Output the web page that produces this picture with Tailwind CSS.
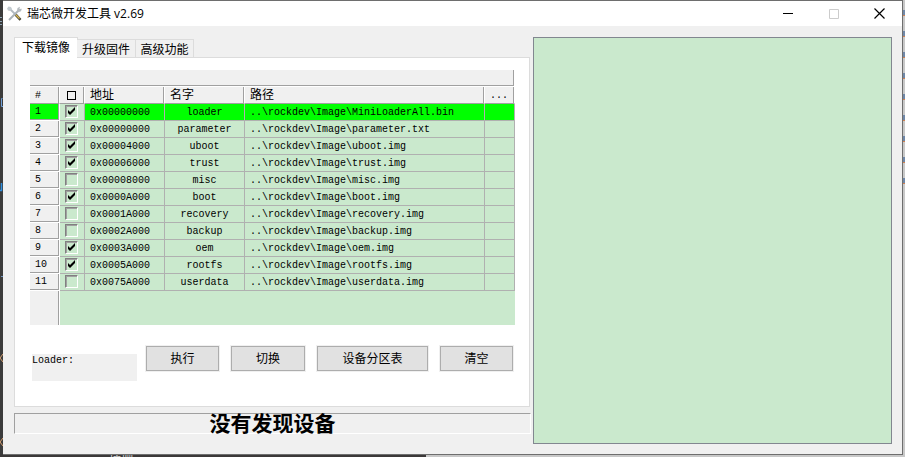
<!DOCTYPE html>
<html lang="zh-CN">
<head>
<meta charset="utf-8">
<title>瑞芯微开发工具 v2.69</title>
<script src="https://cdn.jsdelivr.net/npm/@tailwindcss/browser@4"></script>
</head>
<body class="relative h-screen overflow-hidden bg-[#c8c8c8] pr-[2px] pb-[2px] pl-[3px] font-['Liberation_Sans','Noto_Sans_CJK_SC',sans-serif] text-[12px] leading-[16px] text-black">
<!-- desktop showing around the window -->
<div class="absolute inset-y-0 left-0 w-[3px] bg-[#3b3b3b]" aria-hidden="true">
  <svg class="block h-[457px] w-[3px]" viewBox="0 0 3 457" fill="none">
    <path d="M0 17.5H2M0 21.5H2M0 24.5H2" stroke="#8aa0b0"/>
    <path d="M2.5 98.500H1.500V106.500H3" stroke="#6f9fd8"/>
    <path d="M1.500 183V190.500H0" stroke="#2f8fe0" stroke-width="1.500"/>
    <path d="M1 276.500H3" stroke="#6f93c0"/>
    <path d="M3 354L0 358L3 362M3 438L0 442L3 446" stroke="#d8a070"/>
  </svg>
</div>
<div class="absolute bottom-0 left-0 h-[3px] w-[426px] overflow-hidden bg-[#3b3838] pl-[109px] leading-[14px] text-[#d0d0d0]" aria-hidden="true">按摆</div>
<div class="absolute top-[10px] right-0 flex flex-col gap-[15px]" aria-hidden="true">
  <i class="block h-[6px] w-[2px] border-b border-[#d08050] bg-[#7088a8]"></i>
  <i class="block h-[6px] w-[2px] border-b border-[#d08050] bg-[#7088a8]"></i>
  <i class="block h-[6px] w-[2px] border-b border-[#d08050] bg-[#7088a8]"></i>
  <i class="block h-[6px] w-[2px] border-b border-[#d08050] bg-[#7088a8]"></i>
  <i class="block h-[6px] w-[2px] border-b border-[#d08050] bg-[#7088a8]"></i>
  <i class="block h-[6px] w-[2px] border-b border-[#d08050] bg-[#7088a8]"></i>
  <i class="block h-[6px] w-[2px] border-b border-[#d08050] bg-[#7088a8]"></i>
  <i class="block h-[6px] w-[2px] border-b border-[#d08050] bg-[#7088a8]"></i>
  <i class="block h-[6px] w-[2px] border-b border-[#d08050] bg-[#7088a8]"></i>
</div>
<div class="relative flex h-full flex-col border-t border-r border-b border-[#6e6e6e] bg-[#f0f0f0]">
  <header class="flex h-[25px] shrink-0 items-center bg-white pl-[4px]">
    <svg class="size-[16px]" viewBox="0 0 16 16" fill="none" aria-hidden="true">
      <path d="M2.500 2.500L9 9" stroke="#b3bbc1" stroke-width="1.800"/>
      <path d="M0 2.500L1.500 .5L4 1L5 3L3 5L1 4.500Z" fill="#c3cbd0"/>
      <path d="M8.500 8.500L13.500 13.800" stroke="#4a4636" stroke-width="2.600"/>
      <path d="M8.500 8.500L12.500 12.500" stroke="#d8b850" stroke-width="1.200"/>
      <path d="M11.500 4.500L2 14" stroke="#a9b2b8" stroke-width="2"/>
      <path d="M10 5L10.500 2L13 .8L12.400 3L14.800 2.800L14 5.300L11.200 6.200Z" fill="#b4babf"/>
    </svg>
    <h1 class="ml-[4px] flex-1 font-['Open_Sans','Noto_Sans_CJK_SC',sans-serif] text-[12px]">瑞芯微开发工具 v2.69</h1>
    <button class="grid h-[25px] w-[46px] place-items-center" aria-label="最小化"><svg class="size-[11px]" viewBox="0 0 11 11" aria-hidden="true"><path d="M0 5.5H10" stroke="#000"/></svg></button>
    <button class="grid h-[25px] w-[45px] place-items-center" aria-label="最大化" disabled><svg class="size-[10px]" viewBox="0 0 10 10" aria-hidden="true"><path d="M.5 .5H9.5V9.5H.5Z" fill="none" stroke="#ccc"/></svg></button>
    <button class="grid h-[25px] w-[46px] place-items-center" aria-label="关闭"><svg class="size-[11px]" viewBox="0 0 11 11" aria-hidden="true"><path d="M.5 .5L10.5 10.5M10.5 .5L.5 10.5" stroke="#000" stroke-width="1.2"/></svg></button>
  </header>
  <main class="flex min-h-0 flex-1 gap-[2px] pt-[11px] pr-[10px] pb-[10px] pl-[11px]">
    <section class="flex w-[517px] shrink-0 flex-col">
      <div class="relative z-10 -mb-px flex items-end" role="tablist">
        <button role="tab" aria-selected="true" class="h-[21px] w-[64px] border border-b-0 border-[#dcdcdc] bg-white">下载镜像</button>
        <button role="tab" aria-selected="false" class="-ml-px h-[19px] w-[59px] border border-l-0 border-[#dcdcdc] bg-[#f0f0f0] pt-[2px]">升级固件</button>
        <button role="tab" aria-selected="false" class="h-[19px] w-[58px] border border-l-0 border-[#dcdcdc] bg-[#f0f0f0] pt-[2px]">高级功能</button>
      </div>
      <div role="tabpanel" class="mr-px flex-1 border border-[#dcdcdc] bg-white pt-[12px] pr-[14px] pl-[15px]">
        <div class="mr-px h-[16px] border-r border-b border-[#a0a0a0] bg-[#f0f0f0]"></div>
        <div class="bg-[#cae9cd]">
          <table class="w-full table-fixed border-separate border-spacing-0 font-['Liberation_Mono','Noto_Sans_CJK_SC',monospace] text-[10px] leading-[14px]">
            <colgroup><col class="w-[30px]"><col class="w-[25px]"><col class="w-[80px]"><col class="w-[80px]"><col><col class="w-[30px]"></colgroup>
            <thead class="text-left">
              <tr id="head" class="h-[18px] bg-[#f0f0f0]"></tr>
            </thead>
            <tbody id="rows"></tbody>
          </table>
          <div class="h-[34px] w-[30px] border-r border-white bg-[#f0f0f0]"><div class="h-full border-r border-[#a0a0a0]"></div></div>
        </div>
        <div class="mt-[20px] mr-px flex items-start justify-between pl-[2px]">
          <div class="mt-[9px] h-[27px] w-[105px] bg-[#f0f0f0] font-['Liberation_Mono',monospace] text-[10px] leading-[14px]">Loader:</div>
          <div class="flex gap-[10px]">
            <button class="h-[27px] w-[75px] border border-[#f0f0f0] bg-[#adadad] p-px"><span class="block h-full bg-[#e1e1e1] leading-[24px]">执行</span></button>
            <button class="h-[27px] w-[76px] border border-[#f0f0f0] bg-[#adadad] p-px"><span class="block h-full bg-[#e1e1e1] leading-[24px]">切换</span></button>
            <button class="h-[27px] w-[113px] border border-[#f0f0f0] bg-[#adadad] p-px"><span class="block h-full bg-[#e1e1e1] leading-[24px]">设备分区表</span></button>
            <button class="h-[27px] w-[75px] border border-[#f0f0f0] bg-[#adadad] p-px"><span class="block h-full bg-[#e1e1e1] leading-[24px]">清空</span></button>
          </div>
        </div>
      </div>
      <p role="status" class="mt-[6px] mb-[10px] h-[21px] border border-t-[#a0a0a0] border-r-white border-b-white border-l-[#a0a0a0] text-center font-['Noto_Sans_CJK_SC',sans-serif] text-[21px] leading-[17px] font-bold">没有发现设备</p>
    </section>
    <textarea aria-label="日志" readonly class="min-w-0 flex-1 resize-none border border-[#828790] bg-[#cae9cd] outline-none"></textarea>
  </main>
</div>
<script>
const boxLabel = '<span class="ml-[2px] block size-[9px] border border-black"></span>';
const headers = [["#", "text-[10px]"], [boxLabel, ""], ["地址", "text-[12px]"], ["名字", "text-[12px]"], ["路径", "text-[12px]"], ["...", "text-[10px]"]];
document.getElementById("head").innerHTML = headers
  .map(([t, size]) => `<th scope="col" class="border-t border-r border-b border-t-white border-r-white border-b-[#a0a0a0] p-0 font-normal"><div class="flex h-[16px] items-center border-r border-[#a0a0a0] pt-px pl-[5px] ${size}">${t}</div></th>`).join("");

const data = [
  [1, "0x00000000", "loader", "MiniLoaderAll.bin"],
  [1, "0x00000000", "parameter", "parameter.txt"],
  [1, "0x00004000", "uboot", "uboot.img"],
  [1, "0x00006000", "trust", "trust.img"],
  [0, "0x00008000", "misc", "misc.img"],
  [1, "0x0000A000", "boot", "boot.img"],
  [0, "0x0001A000", "recovery", "recovery.img"],
  [0, "0x0002A000", "backup", "backup.img"],
  [1, "0x0003A000", "oem", "oem.img"],
  [1, "0x0005A000", "rootfs", "rootfs.img"],
  [0, "0x0075A000", "userdata", "userdata.img"],
];
const line = "border-r border-b border-[#b0b0b0]";
const td = line + " px-0 pt-[2px] pb-0";
document.getElementById("rows").innerHTML = data.map(([on, addr, name, file], i) => {
  const bg = i === 0 ? "bg-[#00ff00]" : "bg-[#cae9cd]";
  const numBg = i === 0 ? "bg-[#00ff00]" : "bg-[#f0f0f0]";
  return `<tr class="h-[17px]">
    <th scope="row" class="border-r border-b border-r-white border-b-white p-0 text-left font-normal ${numBg}"><div class="h-[16px] border-r border-b border-[#a0a0a0] pt-px pl-[5px]">${i + 1}</div></th>
    <td class="${line} bg-[#cae9cd] p-0 align-top"><label class="relative mt-px ml-[5px] block size-[13px]">
      <input type="checkbox" aria-label="${name}" ${on ? "checked" : ""} class="peer block size-[13px] appearance-none border border-t-[#808080] border-r-white border-b-white border-l-[#808080] shadow-[inset_1px_1px_0_#a0a0a0]">
      <svg class="pointer-events-none absolute inset-0 hidden size-[13px] peer-checked:block" viewBox="0 0 13 13" aria-hidden="true"><path d="M3 5V8L5 10L10 5V2L5 7Z"/></svg>
    </label></td>
    <td class="${td} ${bg}"><span class="ml-[5px]">${addr}</span></td>
    <td class="${td} ${bg} text-center">${name}</td>
    <td class="${td} ${bg}"><span class="ml-[5px]">..\\rockdev\\Image\\${file}</span></td>
    <td class="${td} ${bg}"></td>
  </tr>`;
}).join("");
</script>
</body>
</html>
